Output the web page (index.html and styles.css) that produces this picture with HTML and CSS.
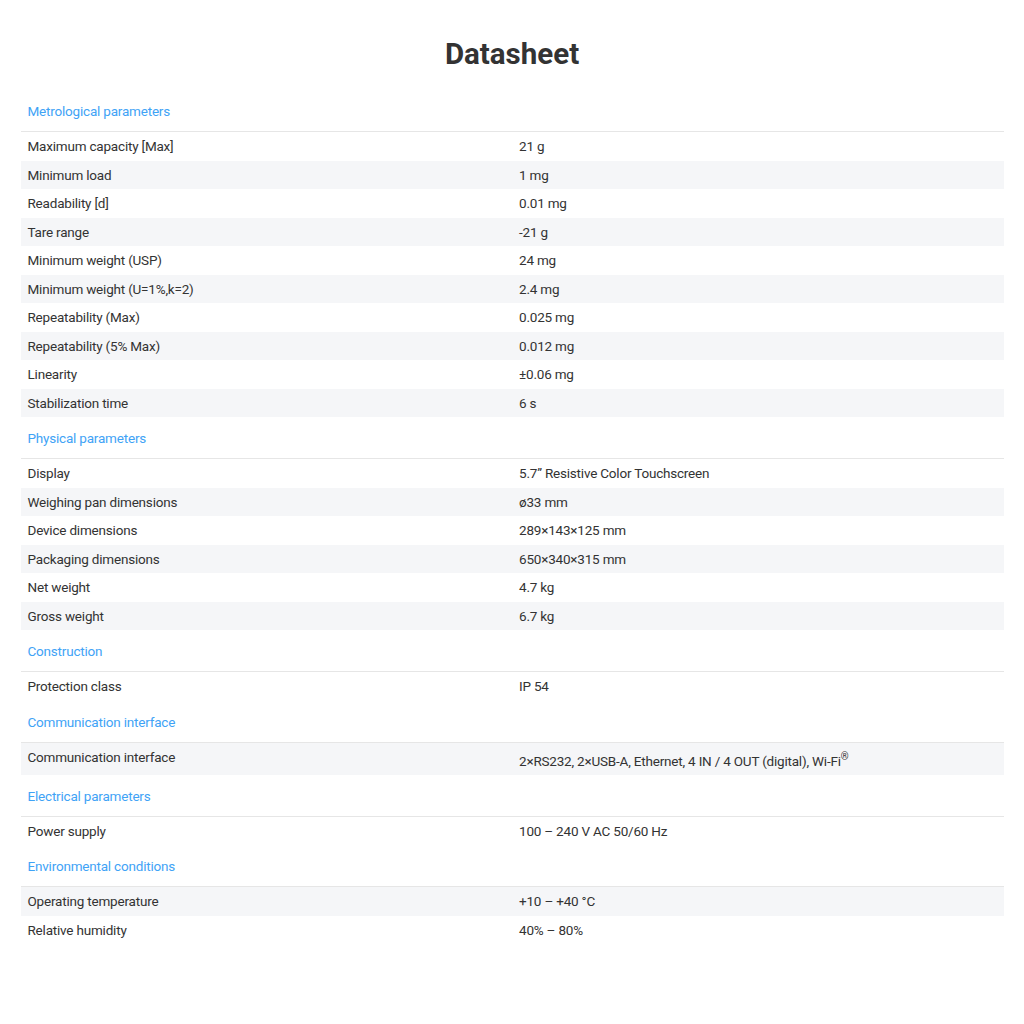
FILE: index.html
```html
<!DOCTYPE html>
<html lang="en">
<head>
<meta charset="utf-8">
<title>Datasheet</title>
<link rel="stylesheet" href="styles.css">
</head>
<body>
<main class="page">
  <h1 class="title">Datasheet</h1>
  <div class="sheet">
    <section class="group">
      <div class="group-head">Metrological parameters</div>
      <div class="row"><div class="cell">Maximum capacity [Max]</div><div class="cell">21 g</div></div>
      <div class="row alt"><div class="cell">Minimum load</div><div class="cell">1 mg</div></div>
      <div class="row"><div class="cell">Readability [d]</div><div class="cell">0.01 mg</div></div>
      <div class="row alt"><div class="cell">Tare range</div><div class="cell">-21 g</div></div>
      <div class="row"><div class="cell">Minimum weight (USP)</div><div class="cell">24 mg</div></div>
      <div class="row alt"><div class="cell">Minimum weight (U=1%,k=2)</div><div class="cell">2.4 mg</div></div>
      <div class="row"><div class="cell">Repeatability (Max)</div><div class="cell">0.025 mg</div></div>
      <div class="row alt"><div class="cell">Repeatability (5% Max)</div><div class="cell">0.012 mg</div></div>
      <div class="row"><div class="cell">Linearity</div><div class="cell">±0.06 mg</div></div>
      <div class="row alt"><div class="cell">Stabilization time</div><div class="cell">6 s</div></div>
    </section>
    <section class="group">
      <div class="group-head">Physical parameters</div>
      <div class="row"><div class="cell">Display</div><div class="cell">5.7” Resistive Color Touchscreen</div></div>
      <div class="row alt"><div class="cell">Weighing pan dimensions</div><div class="cell">ø33 mm</div></div>
      <div class="row"><div class="cell">Device dimensions</div><div class="cell">289×143×125 mm</div></div>
      <div class="row alt"><div class="cell">Packaging dimensions</div><div class="cell">650×340×315 mm</div></div>
      <div class="row"><div class="cell">Net weight</div><div class="cell">4.7 kg</div></div>
      <div class="row alt"><div class="cell">Gross weight</div><div class="cell">6.7 kg</div></div>
    </section>
    <section class="group">
      <div class="group-head">Construction</div>
      <div class="row"><div class="cell">Protection class</div><div class="cell">IP 54</div></div>
    </section>
    <section class="group">
      <div class="group-head">Communication interface</div>
      <div class="row alt"><div class="cell">Communication interface</div><div class="cell">2×RS232, 2×USB-A, Ethernet, 4 IN / 4 OUT (digital), Wi-Fi<sup>®</sup></div></div>
    </section>
    <section class="group">
      <div class="group-head">Electrical parameters</div>
      <div class="row"><div class="cell">Power supply</div><div class="cell">100 – 240 V AC 50/60 Hz</div></div>
    </section>
    <section class="group">
      <div class="group-head">Environmental conditions</div>
      <div class="row alt"><div class="cell">Operating temperature</div><div class="cell">+10 – +40 °C</div></div>
      <div class="row"><div class="cell">Relative humidity</div><div class="cell">40% – 80%</div></div>
    </section>
  </div>
</main>
</body>
</html>
```
FILE: styles.css
```css
html, body {
  margin: 0;
  padding: 0;
  background: #ffffff;
}
body {
  font-family: Roboto, "Liberation Sans", Arial, sans-serif;
  color: #333333;
  font-size: 13.5px;
  letter-spacing: -0.2px;
}
.page {
  width: 983px;
  margin: 0 auto;
  padding-top: 37px;
}
.title {
  margin: 0 0 19px 0;
  font-size: 29.5px;
  line-height: 34px;
  font-weight: 700;
  letter-spacing: 0;
  text-align: center;
  color: #333333;
}
.sheet {
  display: flex;
  flex-direction: column;
}
.group {
  display: flex;
  flex-direction: column;
}
.group-head {
  color: #3fa3f6;
  line-height: 20px;
  padding: 11px 7px 10px;
  border-bottom: 1px solid #e6e6e6;
}
.row {
  display: grid;
  grid-template-columns: 1fr 1fr;
  line-height: 20.5px;
}
.row.alt {
  background: #f5f6f8;
}
.cell {
  padding: 4px 7px;
}
sup {
  font-size: 10px;
  letter-spacing: 0;
}
```
